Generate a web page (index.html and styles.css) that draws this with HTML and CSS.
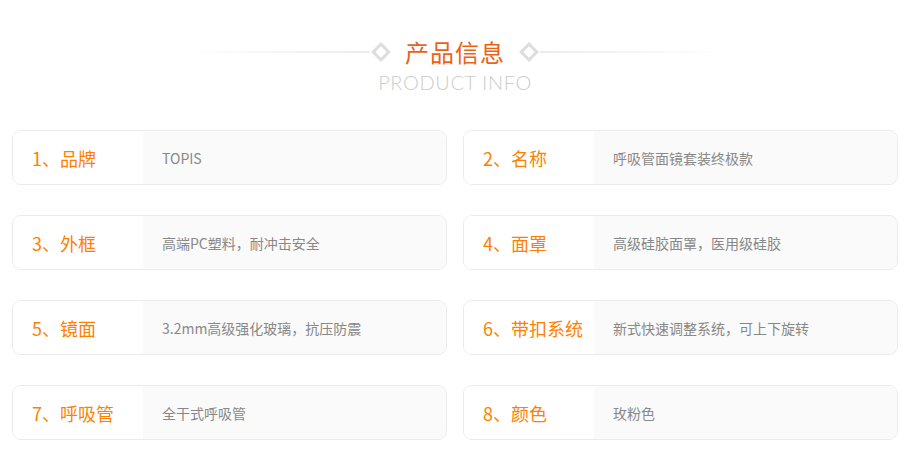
FILE: index.html
```html
<!DOCTYPE html>
<html lang="zh">
<head>
<meta charset="utf-8">
<link rel="stylesheet" href="styles.css">
</head>
<body>
<div class="page">
  <div class="head">
    <div class="title-row">
      <span class="line line-left"></span>
      <span class="diamond"></span>
      <h1 class="title">产品信息</h1>
      <span class="diamond"></span>
      <span class="line line-right"></span>
    </div>
    <div class="subtitle">PRODUCT INFO</div>
  </div>
  <div class="grid">
    <div class="card"><div class="label">1、品牌</div><div class="value">TOPIS</div></div>
    <div class="card"><div class="label">2、名称</div><div class="value">呼吸管面镜套装终极款</div></div>
    <div class="card"><div class="label">3、外框</div><div class="value">高端PC塑料，耐冲击安全</div></div>
    <div class="card"><div class="label">4、面罩</div><div class="value">高级硅胶面罩，医用级硅胶</div></div>
    <div class="card"><div class="label">5、镜面</div><div class="value">3.2mm高级强化玻璃，抗压防震</div></div>
    <div class="card"><div class="label">6、带扣系统</div><div class="value">新式快速调整系统，可上下旋转</div></div>
    <div class="card"><div class="label">7、呼吸管</div><div class="value">全干式呼吸管</div></div>
    <div class="card"><div class="label">8、颜色</div><div class="value">玫粉色</div></div>
  </div>
</div>
</body>
</html>
```
FILE: styles.css
```css
* { box-sizing: border-box; }
html, body { margin: 0; padding: 0; background: #fff; }
body { font-family: "Noto Sans CJK SC", "Noto Sans", sans-serif; }
.page { width: 910px; padding: 0 12px; }
.head { height: 130px; padding-top: 35px; display: flex; flex-direction: column; align-items: center; }
.title-row { display: flex; align-items: center; height: 34px; }
.line { width: 190px; height: 2px; }
.line-left { background: linear-gradient(to right, rgba(238,238,238,0), #ececec); }
.line-right { background: linear-gradient(to left, rgba(238,238,238,0), #ececec); }
.diamond { width: 14px; height: 14px; border: 3px solid #dddddd; transform: rotate(45deg); margin: 0 4px; }
.title { margin: 0 13px 0 13px; font-size: 24px; font-weight: normal; color: #ea6218; line-height: 34px; letter-spacing: 1px; }
.subtitle { margin-top: 2px; font-family: "Lato", "Open Sans", sans-serif; font-weight: 300; font-size: 20px; color: #cccccc; letter-spacing: 0.6px; line-height: 22px; }
.grid { display: grid; grid-template-columns: 435px 435px; column-gap: 16px; row-gap: 30px; }
.card { display: flex; height: 55px; border: 1px solid #ebebeb; border-radius: 9px; overflow: hidden; }
.label { width: 130px; flex: none; background: #fff; padding-left: 19px; display: flex; align-items: center; font-size: 18px; color: #ff7f00; }
.value { flex: 1; background: #fafafa; padding-left: 19px; display: flex; align-items: center; font-size: 14px; color: #888; }
```
